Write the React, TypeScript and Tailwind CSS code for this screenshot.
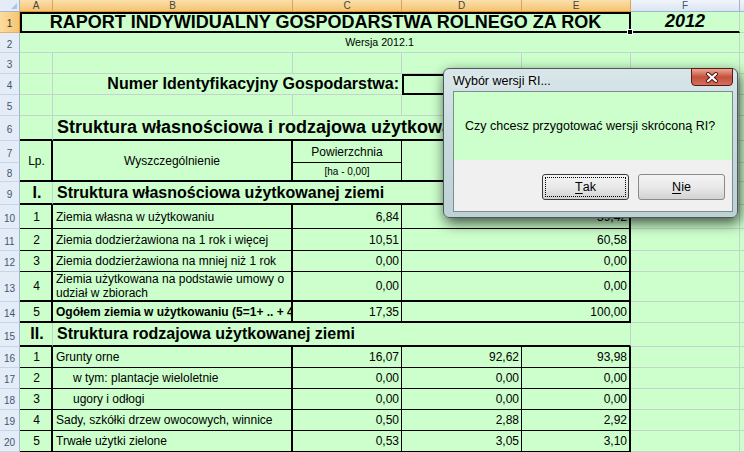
import React from "react";

type BT = "g" | "t" | "T" | "n";

// right / bottom border of a cell: gridline, thin black, thick black, none
const R: Record<BT, string> = {
  g: "border-r border-r-[#c3d4cc]",
  t: "border-r border-r-black",
  T: "border-r-2 border-r-black",
  n: "",
};
const B: Record<BT, string> = {
  g: "border-b border-b-[#c3d4cc]",
  t: "border-b border-b-black",
  T: "border-b-2 border-b-black",
  n: "",
};

function Cell({
  w,
  r = "g",
  b = "g",
  wrap,
  className = "",
  children,
}: {
  w: string;
  r?: BT;
  b?: BT;
  wrap?: boolean;
  className?: string;
  children?: React.ReactNode;
}) {
  return (
    <div
      className={`${w} shrink-0 h-full flex items-center overflow-hidden ${
        wrap ? "whitespace-normal leading-[14px]" : "whitespace-nowrap"
      } ${R[r]} ${B[b]} ${className}`}
    >
      {children}
    </div>
  );
}

function RowHead({ n, sel, h = "h-full" }: { n: number; sel?: boolean; h?: string }) {
  return (
    <div
      className={`w-[20px] shrink-0 ${h} flex items-center justify-center pt-[3px] text-[10px] border-r border-b ${
        sel
          ? "bg-linear-to-r from-[#fbdc9f] to-[#f6c670] text-[#333] border-r-[#e29a3c] border-b-[#e5b066]"
          : "bg-[#e4ecf7] text-[#42566f] border-r-[#9eb6ce] border-b-[#c8d5e6]"
      }`}
    >
      {n}
    </div>
  );
}

function Row({
  h,
  n,
  sel,
  tail = true,
  children,
}: {
  h: string;
  n: number;
  sel?: boolean;
  tail?: boolean;
  children?: React.ReactNode;
}) {
  return (
    <div className={`flex ${h}`}>
      <RowHead n={n} sel={sel} />
      {children}
      {tail && (
        <>
          <Cell w="w-[109px]" />
          <Cell w="flex-1" r="n" />
        </>
      )}
    </div>
  );
}

function Plain({ h, n }: { h: string; n: number }) {
  return (
    <Row h={h} n={n}>
      <Cell w="w-[33px]" />
      <Cell w="w-[240px]" />
      <Cell w="w-[109px]" />
      <Cell w="w-[120px]" />
      <Cell w="w-[109px]" />
    </Row>
  );
}

const colHeads = [
  { l: "A", w: "w-[33px]", sel: true },
  { l: "B", w: "w-[240px]", sel: true },
  { l: "C", w: "w-[109px]", sel: true },
  { l: "D", w: "w-[120px]", sel: true },
  { l: "E", w: "w-[109px]", sel: true },
  { l: "F", w: "w-[109px]", sel: false },
];

const part1 = [
  { n: 10, h: "h-[24px]", lp: "1", name: "Ziemia własna w użytkowaniu", c: "6,84", e: "39,42", b: "t" as BT },
  { n: 11, h: "h-[22px]", lp: "2", name: "Ziemia dodzierżawiona na 1 rok i więcej", c: "10,51", e: "60,58", b: "t" as BT },
  { n: 12, h: "h-[21px]", lp: "3", name: "Ziemia dodzierżawiona na mniej niż 1 rok", c: "0,00", e: "0,00", b: "t" as BT },
  { n: 13, h: "h-[30px]", lp: "4", name: "Ziemia użytkowana na podstawie umowy o udział w zbiorach", c: "0,00", e: "0,00", b: "T" as BT, wrap: true },
  { n: 14, h: "h-[21px]", lp: "5", name: "Ogółem ziemia w użytkowaniu (5=1+ .. + 4)", c: "17,35", e: "100,00", b: "T" as BT, bold: true },
];

const part2 = [
  { n: 16, lp: "1", name: "Grunty orne", c: "16,07", d: "92,62", e: "93,98" },
  { n: 17, lp: "2", name: "w tym: plantacje wieloletnie", c: "0,00", d: "0,00", e: "0,00", indent: true },
  { n: 18, lp: "3", name: "ugory i odłogi", c: "0,00", d: "0,00", e: "0,00", indent: true },
  { n: 19, lp: "4", name: "Sady, szkółki drzew owocowych, winnice", c: "0,50", d: "2,88", e: "2,92" },
  { n: 20, lp: "5", name: "Trwałe użytki zielone", c: "0,53", d: "3,05", e: "3,10" },
];

function WinButton({ first, rest, focused }: { first: string; rest: string; focused?: boolean }) {
  return (
    <div
      className={`w-[87px] h-[26px] rounded-[3px] border p-[2px] bg-linear-to-b from-[#f4f4f4] via-[#e9e9e9] to-[#d2d2d2] ${
        focused ? "border-[#3a3a3a]" : "border-[#8a8a8a]"
      }`}
    >
      <div
        className={`w-full h-full flex items-center justify-center text-[12.5px] text-black ${
          focused ? "border border-dotted border-black" : ""
        }`}
      >
        <span className="underline underline-offset-2">{first}</span>
        {rest}
      </div>
    </div>
  );
}

export default function App() {
  return (
    <div className="w-[744px] h-[452px] overflow-hidden relative bg-[#ccffcc] font-['Liberation_Sans',Arial,sans-serif] text-black">
      {/* column headers */}
      <div className="flex h-[12px] text-[10px] leading-none">
        <div className="w-[20px] shrink-0 h-full bg-[#e4ecf7] border-r border-b border-[#9eb6ce] relative">
          <div className="absolute right-[2px] bottom-[2px] w-0 h-0 border-l-[6px] border-l-transparent border-b-[6px] border-b-[#b4c4d9]" />
        </div>
        {colHeads.map((c) => (
          <div
            key={c.l}
            className={`${c.w} shrink-0 h-full flex items-center justify-center ${
              c.sel
                ? "bg-linear-to-b from-[#fbe0ad] to-[#f5c46e] text-[#444] border-r border-r-[#d6a560] border-b border-b-[#e0963a]"
                : "bg-linear-to-b from-[#f1f5fb] to-[#dce5f2] text-[#42566f] border-r border-r-[#9eb6ce] border-b border-b-[#9eb6ce]"
            }`}
          >
            {c.l}
          </div>
        ))}
        <div className="flex-1 h-full bg-linear-to-b from-[#f1f5fb] to-[#dce5f2] border-b border-b-[#9eb6ce]" />
      </div>

      {/* row 1 */}
      <Row h="h-[21px]" n={1} sel tail={false}>
        <div className="w-[611px] shrink-0 h-full border-2 border-black flex items-center justify-center relative text-[18px] font-bold whitespace-nowrap">
          RAPORT INDYWIDUALNY GOSPODARSTWA ROLNEGO ZA ROK
          <div className="absolute -right-[4px] -bottom-[4px] w-[6px] h-[6px] bg-black border border-white" />
        </div>
        <Cell w="w-[109px]" b="T" className="justify-center text-[18px] font-bold italic">
          2012
        </Cell>
        <Cell w="flex-1" r="n" />
      </Row>

      {/* row 2 */}
      <Row h="h-[20px]" n={2} tail={false}>
        <Cell w="w-[720px]" className="justify-center text-[10.7px]">
          Wersja 2012.1
        </Cell>
        <Cell w="flex-1" r="n" />
      </Row>

      <Plain h="h-[21px]" n={3} />

      {/* row 4 */}
      <Row h="h-[21px]" n={4}>
        <Cell w="w-[33px]" />
        <Cell w="w-[349px]" r="n" className="justify-end pr-[3px] text-[16px] font-bold">
          Numer Identyfikacyjny Gospodarstwa:
        </Cell>
        <div className="w-[229px] shrink-0 h-full border-2 border-black" />
      </Row>

      <Plain h="h-[21px]" n={5} />

      {/* row 6 */}
      <Row h="h-[25px]" n={6}>
        <Cell w="w-[33px]" b="T" />
        <Cell w="w-[578px]" b="T" className="pl-[4px] text-[18px] font-bold">
          Struktura własnościowa i rodzajowa użytkowanej ziemi
        </Cell>
      </Row>

      {/* rows 7-8 table header */}
      <div className="flex h-[41px]">
        <div className="flex flex-col w-[20px] shrink-0">
          <RowHead n={7} h="h-[22px]" />
          <RowHead n={8} h="h-[19px]" />
        </div>
        <Cell w="w-[33px]" r="T" b="T" className="justify-center pl-[2px] text-[12px]">
          Lp.
        </Cell>
        <Cell w="w-[240px]" r="T" b="T" className="justify-center text-[12px]">
          Wyszczególnienie
        </Cell>
        <div className="flex flex-col w-[109px] shrink-0">
          <div className={`h-[22px] flex items-center justify-center text-[12px] ${R.t} ${B.t}`}>Powierzchnia</div>
          <div className={`h-[19px] flex items-center justify-center text-[10px] ${R.t} ${B.T}`}>[ha - 0,00]</div>
        </div>
        <Cell w="w-[120px]" r="t" b="T" />
        <Cell w="w-[109px]" r="T" b="T" />
        <div className="flex flex-col w-[109px] shrink-0">
          <div className={`h-[22px] ${R.g} ${B.g}`} />
          <div className={`h-[19px] ${R.g} ${B.g}`} />
        </div>
        <div className="flex flex-col flex-1">
          <div className={`h-[22px] ${B.g}`} />
          <div className={`h-[19px] ${B.g}`} />
        </div>
      </div>

      {/* row 9 */}
      <Row h="h-[23px]" n={9}>
        <Cell w="w-[33px]" b="T" className="justify-center pl-[2px] text-[16px] font-bold">
          I.
        </Cell>
        <Cell w="w-[578px]" b="T" className="pl-[4px] text-[16px] font-bold">
          Struktura własnościowa użytkowanej ziemi
        </Cell>
      </Row>

      {/* rows 10-14 */}
      {part1.map((p) => (
        <Row key={p.n} h={p.h} n={p.n}>
          <Cell w="w-[33px]" r="T" b={p.b} className="justify-center pl-[2px] text-[12px]">
            {p.lp}
          </Cell>
          <Cell
            w="w-[240px]"
            r="T"
            b={p.b}
            wrap={p.wrap}
            className={`pl-[3px] text-[12px] ${p.bold ? "font-bold" : ""}`}
          >
            {p.name}
          </Cell>
          <Cell w="w-[109px]" r="t" b={p.b} className="justify-end pr-[2px] text-[12px]">
            {p.c}
          </Cell>
          <Cell w="w-[229px]" r="T" b={p.b} className="justify-end pr-[2px] text-[12px]">
            {p.e}
          </Cell>
        </Row>
      ))}

      {/* row 15 */}
      <Row h="h-[24px]" n={15}>
        <Cell w="w-[33px]" b="T" className="justify-center pl-[2px] text-[16px] font-bold">
          II.
        </Cell>
        <Cell w="w-[578px]" b="T" className="pl-[4px] text-[16px] font-bold">
          Struktura rodzajowa użytkowanej ziemi
        </Cell>
      </Row>

      {/* rows 16-20 */}
      {part2.map((p) => (
        <Row key={p.n} h="h-[21px]" n={p.n}>
          <Cell w="w-[33px]" r="T" b="t" className="justify-center pl-[2px] text-[12px]">
            {p.lp}
          </Cell>
          <Cell w="w-[240px]" r="T" b="t" className={`text-[12px] ${p.indent ? "pl-[20px]" : "pl-[3px]"}`}>
            {p.name}
          </Cell>
          <Cell w="w-[109px]" r="t" b="t" className="justify-end pr-[2px] text-[12px]">
            {p.c}
          </Cell>
          <Cell w="w-[120px]" r="t" b="t" className="justify-end pr-[2px] text-[12px]">
            {p.d}
          </Cell>
          <Cell w="w-[109px]" r="T" b="t" className="justify-end pr-[2px] text-[12px]">
            {p.e}
          </Cell>
        </Row>
      ))}

      {/* message box */}
      <div className="absolute left-[443px] top-[68px] w-[295px] h-[150px] rounded-[6px] border border-[#4c5a5e] bg-linear-to-b from-[#d8e6e9] via-[#c6d9dc] to-[#bed2d5] shadow-[2px_5px_14px_rgba(0,0,0,0.7)]">
        <div className="h-[22px] flex items-center pl-[9px] pt-[2px] text-[12.5px] [text-shadow:0_0_6px_#ffffff]">
          Wybór wersji RI...
        </div>
        <div className="absolute right-[4px] -top-px w-[42px] h-[18px] rounded-b-[4px] border border-[#5a1a14] bg-linear-to-b from-[#e9a898] via-[#c4503d] to-[#d26f5c] flex items-center justify-center">
          <svg width="14" height="11" viewBox="0 0 14 11">
            <path d="M3 2 L11 9 M11 2 L3 9" stroke="#4a1410" strokeWidth="4" strokeLinecap="round" />
            <path d="M3 2 L11 9 M11 2 L3 9" stroke="#ffffff" strokeWidth="2.2" strokeLinecap="round" />
          </svg>
        </div>
        <div className="ml-[9px] mr-[4px] border border-[#7c8c90] flex flex-col">
          <div className="h-[68px] bg-[#ccffcc] flex items-center pl-[11px] text-[12.5px]">
            Czy chcesz przygotować wersji skróconą RI?
          </div>
          <div className="h-[51px] bg-[#f0f0f0] flex justify-end items-start gap-[9px] pt-[14px] pr-[7px]">
            <WinButton first="T" rest="ak" focused />
            <WinButton first="N" rest="ie" />
          </div>
        </div>
      </div>
    </div>
  );
}
